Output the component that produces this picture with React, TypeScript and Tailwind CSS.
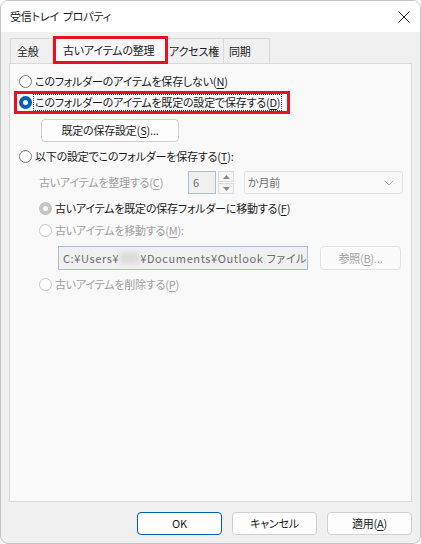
import React from 'react';

const font = "font-['Noto_Sans_CJK_JP','Noto_Sans',sans-serif] [font-feature-settings:'palt']";

const Radio = ({ checked, disabled }: { checked?: boolean; disabled?: boolean }) => {
  if (checked && !disabled) {
    return (
      <span className="w-[13px] h-[13px] rounded-full bg-[#005fb8] flex items-center justify-center shrink-0">
        <span className="w-[5px] h-[5px] rounded-full bg-white" />
      </span>
    );
  }
  if (checked && disabled) {
    return (
      <span className="w-[13px] h-[13px] rounded-full bg-[#c5c5c5] flex items-center justify-center shrink-0">
        <span className="w-[5px] h-[5px] rounded-full bg-[#f9f9f9]" />
      </span>
    );
  }
  return (
    <span
      className={`w-[13px] h-[13px] rounded-full border bg-white shrink-0 ${disabled ? 'border-[#c8c8c8]' : 'border-[#7a7a7a]'}`}
    />
  );
};

const U = ({ children }: { children: React.ReactNode }) => <span className="underline underline-offset-2">{children}</span>;

export default function App() {
  return (
    <div className={`w-[421px] h-[544px] bg-[#f0f0f0] border border-[#c4c4c4] rounded-[8px] overflow-hidden flex flex-col text-[11px] tracking-[-0.2px] text-[#1b1b1b] whitespace-nowrap ${font}`}>
      {/* title bar */}
      <div className="h-[31px] bg-white flex items-center justify-between pl-[9px] pr-[9px] shrink-0">
        <span>
          受信トレイ<span className="ml-[4px]">プロパティ</span>
        </span>
        <svg width="12" height="12" viewBox="0 0 12 12" className="mr-[1px]">
          <path d="M0.5 0.5 L11.5 11.5 M11.5 0.5 L0.5 11.5" stroke="#1b1b1b" strokeWidth="1" />
        </svg>
      </div>

      {/* tabs */}
      <div className="flex items-end h-[31px] pl-[9px] shrink-0">
        <div className="h-[25px] pl-[6px] flex items-center border border-b-0 border-[#d9d9d9] bg-[#f0f0f0] w-[43px]">全般</div>
        <div className="h-[28px] -mb-[1px] border-[3px] border-[#e81123] w-[115px] relative z-10 flex">
          <div className="flex-1 bg-[#f9f9f9] flex items-center pl-[7px]">古いアイテムの整理</div>
        </div>
        <div className="h-[25px] pl-[1px] flex items-center border-t border-[#d9d9d9] bg-[#f0f0f0] w-[55px]">アクセス権</div>
        <div className="h-[25px] pl-[5px] flex items-center border border-b-0 border-[#d9d9d9] bg-[#f0f0f0] w-[47px]">同期</div>
      </div>

      {/* panel */}
      <div className="mx-[8px] h-[439px] border border-[#d9d9d9] bg-[#f9f9f9] flex flex-col pt-[8px] shrink-0">
        <div className="flex items-center gap-[3px] h-[19px] pl-[9px]">
          <Radio />
          <span>このフォルダーのアイテムを保存しない(<U>N</U>)</span>
        </div>

        <div className="ml-[4px] w-[276px] h-[23px] border-[3px] border-[#e81123] flex items-center gap-[1px] pl-[2px]">
          <Radio checked />
          <span className="border border-dotted border-[#333] px-[1px] leading-[15px]">このフォルダーのアイテムを既定の設定で保存する(<U>D</U>)</span>
        </div>

        <button className="ml-[31px] mt-[5px] w-[138px] h-[23px] rounded-[4px] border border-[#d0d0d0] bg-[#fdfdfd] flex items-center justify-center">
          既定の保存設定(<U>S</U>)...
        </button>

        <div className="flex items-center gap-[3px] h-[19px] pl-[9px] mt-[5px]">
          <Radio />
          <span>以下の設定でこのフォルダーを保存する(<U>T</U>):</span>
        </div>

        <div className="flex items-center h-[23px] mt-[5px] text-[#a0a0a0]">
          <span className="ml-[29px] w-[149px]">古いアイテムを整理する(<U>C</U>)</span>
          <div className="w-[28px] h-[23px] border border-[#a9bdd6] bg-[#f0f0f0] text-[#6d6d6d] flex items-center pl-[4px]">6</div>
          <div className="ml-[2px] w-[16px] h-[23px] flex flex-col gap-[1px]">
            <div className="flex-1 border border-[#dcdcdc] bg-[#f5f5f5] flex items-center justify-center">
              <svg width="7" height="4" viewBox="0 0 7 4"><path d="M0 4 L3.5 0 L7 4 Z" fill="#8a8a8a" /></svg>
            </div>
            <div className="flex-1 border border-[#dcdcdc] bg-[#f5f5f5] flex items-center justify-center">
              <svg width="7" height="4" viewBox="0 0 7 4"><path d="M0 0 L3.5 4 L7 0 Z" fill="#8a8a8a" /></svg>
            </div>
          </div>
          <div className="ml-[10px] w-[159px] h-[23px] border border-[#e3e3e3] rounded-[3px] bg-[#f9f9f9] flex items-center justify-between pl-[3px] pr-[8px] text-[#707070]">
            <span>か月前</span>
            <svg width="10" height="6" viewBox="0 0 10 6"><path d="M0.5 0.5 L5 5 L9.5 0.5" fill="none" stroke="#b0b0b0" strokeWidth="1" /></svg>
          </div>
        </div>

        <div className="flex items-center gap-[3px] h-[19px] pl-[29px] mt-[5px]">
          <Radio checked disabled />
          <span>古いアイテムを既定の保存フォルダーに移動する(<U>F</U>)</span>
        </div>

        <div className="flex items-center gap-[3px] h-[19px] pl-[29px] mt-[3px] text-[#a0a0a0]">
          <Radio disabled />
          <span>古いアイテムを移動する(<U>M</U>):</span>
        </div>

        <div className="flex items-center h-[24px] mt-[6px] ml-[48px]">
          <div className="w-[250px] h-[24px] border border-[#a9bdd6] bg-[#f0f0f0] text-[#6d6d6d] flex items-center pl-[4px] overflow-hidden tracking-[0.6px]">
            <span>C:¥Users¥</span>
            <span className="inline-block w-[34px] h-[12px] mx-[1px] bg-[#dcdcdc] blur-[2px]" />
            <span>¥Documents¥Outlook ファイル</span>
          </div>
          <div className="ml-[12px] w-[81px] h-[24px] border border-[#e3e3e3] rounded-[4px] bg-[#fbfbfb] text-[#a0a0a0] flex items-center justify-center">
            参照(<U>B</U>)...
          </div>
        </div>

        <div className="flex items-center gap-[3px] h-[19px] pl-[29px] mt-[5px] text-[#a0a0a0]">
          <Radio disabled />
          <span>古いアイテムを削除する(<U>P</U>)</span>
        </div>
      </div>

      {/* buttons */}
      <div className="flex justify-end gap-[10px] pr-[8px] mt-[10px]">
        <button className="w-[85px] h-[23px] rounded-[4px] border border-[#005fb8] bg-[#fdfdfd] flex items-center justify-center">OK</button>
        <button className="w-[85px] h-[23px] rounded-[4px] border border-[#d0d0d0] bg-[#fdfdfd] flex items-center justify-center">キャンセル</button>
        <button className="w-[85px] h-[23px] rounded-[4px] border border-[#d0d0d0] bg-[#fdfdfd] flex items-center justify-center">適用(<U>A</U>)</button>
      </div>
    </div>
  );
}
